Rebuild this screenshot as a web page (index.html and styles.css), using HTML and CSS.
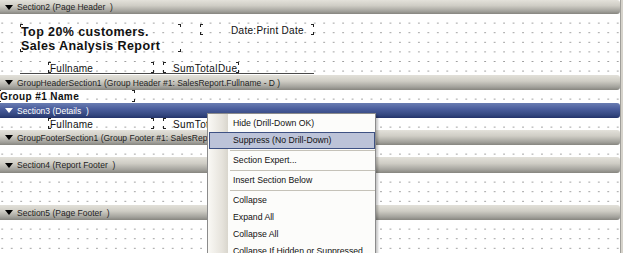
FILE: index.html
```html
<!DOCTYPE html>
<html>
<head>
<meta charset="utf-8">
<link rel="stylesheet" href="styles.css">
</head>
<body>
<div class="designer">
  <div class="sections">
    <div class="band first"><span class="arrow"></span>Section2 (Page Header  )</div>
    <div class="area a1">
      <div class="fld frame title">Top 20% customers.<br>Sales Analysis Report</div>
      <div class="fld frame date">Date:Print Date</div>
      <div class="fld frame name">Fullname</div>
      <div class="fld frame sum">SumTotalDue</div>
      <div class="rule"></div>
    </div>
    <div class="band"><span class="arrow"></span>GroupHeaderSection1 (Group Header #1: SalesReport.Fullname - D )</div>
    <div class="area a2">
      <div class="fld frame grp">Group #1 Name</div>
    </div>
    <div class="band sel"><span class="arrow"></span>Section3 (Details  )</div>
    <div class="area a3">
      <div class="fld frame name d">Fullname</div>
      <div class="fld frame sum d">SumTotalDue</div>
    </div>
    <div class="band"><span class="arrow"></span>GroupFooterSection1 (Group Footer #1: SalesReport.Fullname - D )</div>
    <div class="area a4"></div>
    <div class="band tall"><span class="arrow"></span>Section4 (Report Footer  )</div>
    <div class="area a5"></div>
    <div class="band"><span class="arrow"></span>Section5 (Page Footer  )</div>
    <div class="area a6"></div>
  </div>
  <div class="edge"></div>

  <div class="menu">
    <div class="item">Hide (Drill-Down OK)</div>
    <div class="item hl">Suppress (No Drill-Down)</div>
    <div class="sep"></div>
    <div class="item">Section Expert...</div>
    <div class="sep"></div>
    <div class="item">Insert Section Below</div>
    <div class="sep"></div>
    <div class="item">Collapse</div>
    <div class="item">Expand All</div>
    <div class="item">Collapse All</div>
    <div class="item">Collapse If Hidden or Suppressed</div>
  </div>
</div>
</body>
</html>
```

FILE: styles.css
```css
* { box-sizing: border-box; }

body {
  margin: 0;
  width: 623px;
  height: 253px;
  overflow: hidden;
  background: #fff;
  font-family: "Liberation Sans", Arial, sans-serif;
}

.designer {
  position: relative;
  display: flex;
  height: 253px;
  overflow: hidden;
}

.sections {
  width: 620px;
  display: flex;
  flex-direction: column;
}

.edge {
  width: 3px;
  background: #d6d3cb;
  border-left: 1px solid #9f9e99;
}

.band {
  flex: none;
  height: 15px;
  display: flex;
  align-items: center;
  font-size: 8.5px;
  color: #1e1e1e;
  white-space: pre;
  overflow: hidden;
  background: linear-gradient(#e3e1da, #cfcdc5 40%, #a3a29c 80%, #86857f);
  border-radius: 0 3px 3px 0;
}
.band.first { height: 14px; }
.band.tall { height: 16px; }
.band.sel {
  color: #fff;
  background: linear-gradient(#6a7db2, #4a5d9c 40%, #34477f 80%, #23336a);
}

.arrow {
  flex: none;
  width: 0;
  height: 0;
  border-left: 4px solid transparent;
  border-right: 4px solid transparent;
  border-top: 5px solid #000;
  margin: 0 4px 0 5px;
}
.sel .arrow { border-top-color: #fff; }

.area {
  flex: none;
  position: relative;
  background-color: #fff;
  background-image:
    linear-gradient(to right, #fff 0 7.48px, transparent 7.48px),
    linear-gradient(#fff 0 8.3px, #9f9f9f 8.3px);
  background-size: 9.48px 9.6px;
  background-position: 3.2px 0;
}
.a1 { height: 61px; }
.a2 { height: 13px; }
.a3 { height: 12px; }
.a4 { height: 12px; }
.a5 { height: 32px; }
.a6 { height: 33px; }

.fld {
  position: absolute;
  font-size: 10px;
  line-height: 11px;
  color: #111;
  letter-spacing: 0.25px;
  white-space: nowrap;
}

.frame {
  background:
    linear-gradient(#222, #222) 0 0 / 1px 3px no-repeat,
    linear-gradient(#222, #222) 0 0 / 3px 1px no-repeat,
    linear-gradient(#222, #222) 100% 0 / 1px 3px no-repeat,
    linear-gradient(#222, #222) 100% 0 / 3px 1px no-repeat,
    linear-gradient(#222, #222) 0 100% / 1px 3px no-repeat,
    linear-gradient(#222, #222) 0 100% / 3px 1px no-repeat,
    linear-gradient(#222, #222) 100% 100% / 1px 3px no-repeat,
    linear-gradient(#222, #222) 100% 100% / 3px 1px no-repeat;
}

.title {
  left: 20px;
  top: 10px;
  width: 161px;
  height: 28px;
  padding: 1px 0 0 1px;
  font-size: 12.5px;
  line-height: 14px;
  font-weight: bold;
  letter-spacing: 0.4px;
}

.date {
  left: 200px;
  top: 10px;
  width: 114px;
  height: 11px;
  padding: 1px 0 0 31px;
  letter-spacing: 0.3px;
}

.name {
  left: 48px;
  top: 48px;
  width: 106px;
  height: 11px;
  padding: 1px 0 0 2px;
}

.sum {
  left: 163px;
  top: 48px;
  width: 76px;
  height: 11px;
  padding: 1px 0 0 10px;
  letter-spacing: 0.4px;
}

.d { top: 0; }

.rule {
  position: absolute;
  left: 20px;
  top: 59px;
  width: 294px;
  height: 1px;
  background: #4a4a4a;
}

.grp {
  left: -2px;
  top: 0;
  width: 137px;
  height: 12px;
  padding: 1px 0 0 2px;
  font-weight: bold;
  letter-spacing: 0.4px;
}

.menu {
  position: absolute;
  left: 207px;
  top: 113px;
  width: 169px;
  height: 150px;
  padding-top: 1px;
  border: 1px solid #8b8b8b;
  background: linear-gradient(to right, #faf9f5 0, #e6e3dc 14px, #d9d6cd 20px, #fcfcfa 20px);
  box-shadow: 2px 2px 2px rgba(0, 0, 0, 0.22);
  font-size: 8.7px;
  color: #111;
}

.item {
  height: 17px;
  line-height: 17px;
  padding-left: 25px;
  white-space: nowrap;
}

.item.hl {
  margin-left: 1px;
  padding-left: 23px;
  line-height: 15px;
  background: #bcc3d8;
  border: 1px solid #3e5183;
}

.sep {
  height: 3px;
  margin-left: 22px;
  background: linear-gradient(transparent 1px, #c5c2b8 1px, #c5c2b8 2px, transparent 2px);
}
```
